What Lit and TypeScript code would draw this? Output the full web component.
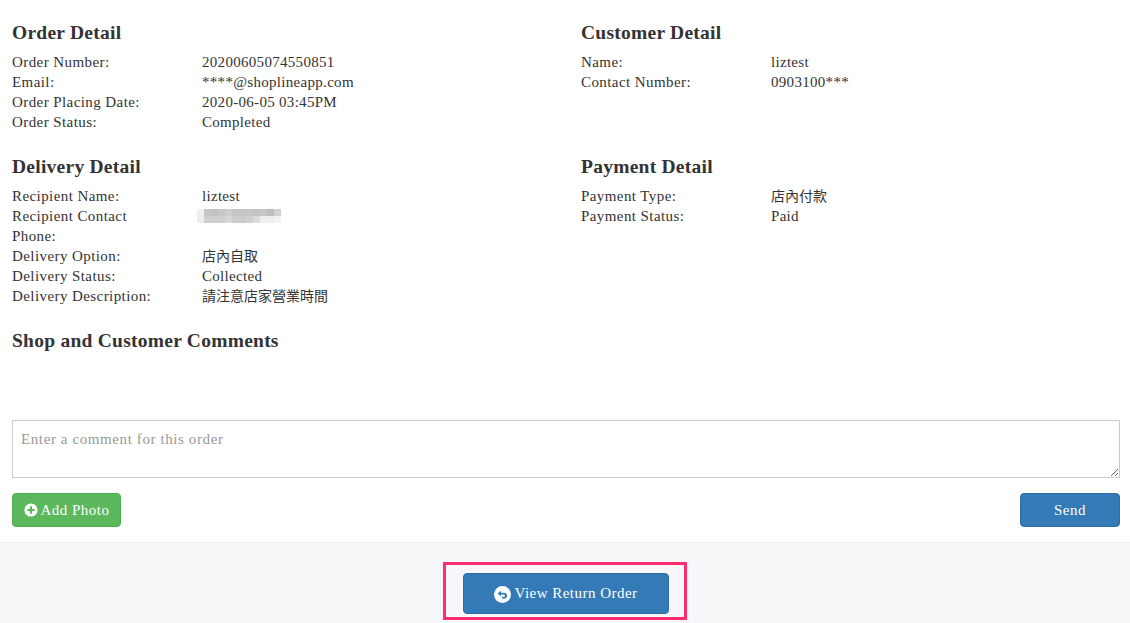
import { html, css, LitElement, svg } from 'lit';
import { customElement } from 'lit/decorators.js';

type Row = { label: string; value?: string; cjk?: boolean; blurred?: boolean };
type Section = { title: string; rows: Row[] };

const orderDetail: Section = {
  title: 'Order Detail',
  rows: [
    { label: 'Order Number:', value: '20200605074550851' },
    { label: 'Email:', value: '****@shoplineapp.com' },
    { label: 'Order Placing Date:', value: '2020-06-05 03:45PM' },
    { label: 'Order Status:', value: 'Completed' },
  ],
};

const customerDetail: Section = {
  title: 'Customer Detail',
  rows: [
    { label: 'Name:', value: 'liztest' },
    { label: 'Contact Number:', value: '0903100***' },
  ],
};

const deliveryDetail: Section = {
  title: 'Delivery Detail',
  rows: [
    { label: 'Recipient Name:', value: 'liztest' },
    { label: 'Recipient Contact Phone:', blurred: true },
    { label: 'Delivery Option:', value: '店內自取', cjk: true },
    { label: 'Delivery Status:', value: 'Collected' },
    { label: 'Delivery Description:', value: '請注意店家營業時間', cjk: true },
  ],
};

const paymentDetail: Section = {
  title: 'Payment Detail',
  rows: [
    { label: 'Payment Type:', value: '店內付款', cjk: true },
    { label: 'Payment Status:', value: 'Paid' },
  ],
};

// pixelated phone number, two rows of 7px cells
const blurCells = [
  '#f0f0f0', '#c6c6c6', '#c2c2c2', '#c8c8c8', '#cecece', '#c4c4c4', '#c4c4c4', '#c6c6c6', '#c2c2c2', '#c6c6c6', '#bebebe', '#d2d2d2',
  '#eeeeee', '#d0d0d0', '#cecece', '#d0d0d0', '#d6d6d6', '#cccccc', '#cccccc', '#d0d0d0', '#dcdcdc', '#eeeeee', '#eeeeee', '#f2f2f2',
];

const plusIcon = svg`<circle cx="8" cy="8" r="7.5" fill="#fff"/><path d="M8 3.8v8.4M3.8 8h8.4" stroke="#5cb85c" stroke-width="2.4" fill="none"/>`;
const replyIcon = svg`<circle cx="8" cy="8" r="8" fill="#fff"/><path d="M6.6 4.4 3.4 7l3.2 2.6V8h2.2c1 0 1.5.5 1.5 1.2 0 .6-.4 1-1.1 1H7.4v1.6h2c1.8 0 2.9-1.1 2.9-2.7S11.100 6.300 9 6.300H6.600z" fill="#337ab7"/>`;

@customElement('app-root')
export class AppRoot extends LitElement {
  static styles = css`
    :host {
      display: flex;
      flex-direction: column;
      min-height: 100vh;
      font-family: 'Liberation Serif', 'Noto Sans CJK TC', serif;
      font-size: 15px;
      line-height: 20px;
      color: #333;
      background: #fff;
    }

    .content {
      padding: 22px 10px 15px 12px;
    }

    .details {
      display: grid;
      grid-template-columns: 569px 1fr;
      row-gap: 24px;
    }

    h3 {
      margin: 0 0 9px;
      padding-top: 1px;
      font-size: 19.5px;
      line-height: 20px;
      font-weight: 700;
      letter-spacing: 0.25px;
    }

    .row {
      display: grid;
      grid-template-columns: 190px 1fr;
    }

    .label {
      width: 150px;
      letter-spacing: 0.42px;
    }

    .value {
      letter-spacing: 0.3px;
    }

    .cjk {
      margin-top: -1px;
      font-family: 'Noto Sans CJK TC', sans-serif;
      font-size: 14px;
      letter-spacing: 0;
    }

    .blur {
      display: grid;
      grid-template-columns: repeat(12, 7px);
      grid-auto-rows: 7px;
      margin: 3px 0 0 -5px;
    }

    .comments {
      margin-top: 24px;
      height: 90px;
    }

    .comments h3 {
      margin: 0;
    }

    textarea {
      display: block;
      box-sizing: border-box;
      width: 1108px;
      height: 58px;
      padding: 8px;
      border: 1px solid #ccc;
      border-radius: 0;
      outline: none;
      font: inherit;
      letter-spacing: 0.6px;
      color: #333;
    }

    textarea::placeholder {
      color: #999;
      opacity: 1;
    }

    .actions {
      display: flex;
      justify-content: space-between;
      width: 1108px;
      margin-top: 15px;
    }

    button {
      display: inline-flex;
      align-items: center;
      justify-content: center;
      box-sizing: border-box;
      height: 34px;
      padding: 0;
      border: 1px solid #2e6da4;
      border-radius: 4px;
      background: #337ab7;
      color: #fff;
      font: inherit;
      letter-spacing: 0.48px;
    }

    button svg {
      display: block;
      flex: none;
    }

    .add {
      width: 109px;
      gap: 3px;
      background: #5cb85c;
      border-color: #4cae4c;
    }

    .add svg {
      width: 14px;
      height: 14px;
    }

    .send {
      width: 100px;
    }

    .footer {
      flex: 1;
      display: flex;
      justify-content: center;
      align-items: flex-start;
      padding-top: 19px;
      border-top: 1px solid #eee;
      background: #f7f7f9;
    }

    .highlight {
      padding: 8px 15px 3px 17px;
      border: 3px solid #ff2d6f;
    }

    .return {
      width: 206px;
      height: 41px;
      gap: 3px;
      padding-bottom: 2px;
    }

    .return svg {
      width: 17px;
      height: 17px;
      margin-top: 3px;
    }
  `;

  renderValue(row: Row) {
    if (row.blurred) {
      return html`<div class="blur">
        ${blurCells.map(c => html`<span style="background:${c}"></span>`)}
      </div>`;
    }
    return html`<div class="value ${row.cjk ? 'cjk' : ''}">${row.value}</div>`;
  }

  renderSection(section: Section) {
    return html`
      <section>
        <h3>${section.title}</h3>
        ${section.rows.map(
          row => html`<div class="row">
            <div class="label">${row.label}</div>
            ${this.renderValue(row)}
          </div>`,
        )}
      </section>
    `;
  }

  render() {
    return html`
      <div class="content">
        <div class="details">
          ${this.renderSection(orderDetail)} ${this.renderSection(customerDetail)}
          ${this.renderSection(deliveryDetail)} ${this.renderSection(paymentDetail)}
        </div>
        <div class="comments"><h3>Shop and Customer Comments</h3></div>
        <textarea placeholder="Enter a comment for this order"></textarea>
        <div class="actions">
          <button class="add">
            <svg viewBox="0 0 16 16">${plusIcon}</svg>Add Photo
          </button>
          <button class="send">Send</button>
        </div>
      </div>
      <div class="footer">
        <div class="highlight">
          <button class="return">
            <svg viewBox="0 0 16 16">${replyIcon}</svg>View Return Order
          </button>
        </div>
      </div>
    `;
  }
}
